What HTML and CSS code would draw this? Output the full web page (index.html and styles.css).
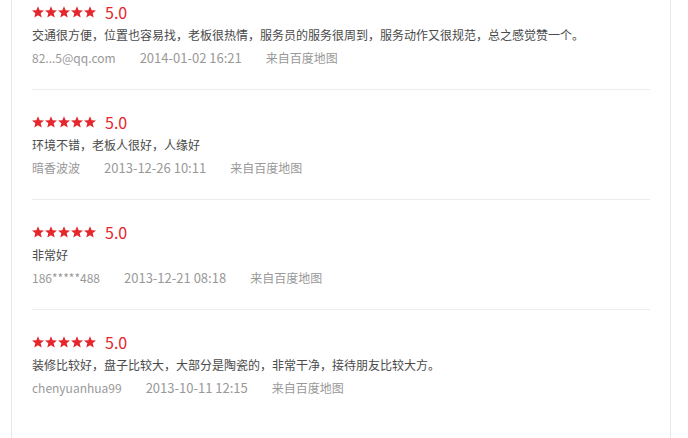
FILE: index.html
```html
<!DOCTYPE html>
<html lang="zh-CN">
<head>
    <meta charset="UTF-8">
    <meta name="viewport" content="width=device-width, initial-scale=1.0">
    <title>用户点评</title>
    <link rel="stylesheet" href="styles.css">
</head>
<body>
    <svg class="sprite" width="0" height="0">
        <defs>
            <polygon id="star" points="6,0.2 7.65,4.23 11.99,4.55 8.66,7.37 9.7,11.6 6,9.3 2.3,11.6 3.34,7.37 0.01,4.55 4.35,4.23"/>
            <g id="stars5">
                <use href="#star" x="0"/>
                <use href="#star" x="13"/>
                <use href="#star" x="26"/>
                <use href="#star" x="39"/>
                <use href="#star" x="52"/>
            </g>
        </defs>
    </svg>

    <div class="review-box">
        <ul class="review-list">
            <li class="review">
                <div class="rating">
                    <svg class="stars" width="64" height="12" viewBox="0 0 64 12"><use href="#stars5"/></svg>
                    <span class="score">5.0</span>
                </div>
                <p class="comment">交通很方便，位置也容易找，老板很热情，服务员的服务很周到，服务动作又很规范，总之感觉赞一个。</p>
                <div class="meta">
                    <span class="user">82...5@qq.com</span>
                    <span class="time">2014-01-02 16:21</span>
                    <span class="source">来自百度地图</span>
                </div>
            </li>
            <li class="review">
                <div class="rating">
                    <svg class="stars" width="64" height="12" viewBox="0 0 64 12"><use href="#stars5"/></svg>
                    <span class="score">5.0</span>
                </div>
                <p class="comment">环境不错，老板人很好，人缘好</p>
                <div class="meta">
                    <span class="user">暗香波波</span>
                    <span class="time">2013-12-26 10:11</span>
                    <span class="source">来自百度地图</span>
                </div>
            </li>
            <li class="review">
                <div class="rating">
                    <svg class="stars" width="64" height="12" viewBox="0 0 64 12"><use href="#stars5"/></svg>
                    <span class="score">5.0</span>
                </div>
                <p class="comment">非常好</p>
                <div class="meta">
                    <span class="user">186*****488</span>
                    <span class="time">2013-12-21 08:18</span>
                    <span class="source">来自百度地图</span>
                </div>
            </li>
            <li class="review">
                <div class="rating">
                    <svg class="stars" width="64" height="12" viewBox="0 0 64 12"><use href="#stars5"/></svg>
                    <span class="score">5.0</span>
                </div>
                <p class="comment">装修比较好，盘子比较大，大部分是陶瓷的，非常干净，接待朋友比较大方。</p>
                <div class="meta">
                    <span class="user">chenyuanhua99</span>
                    <span class="time">2013-10-11 12:15</span>
                    <span class="source">来自百度地图</span>
                </div>
            </li>
        </ul>
    </div>
</body>
</html>
```

FILE: styles.css
```css
body {
    margin: 0;
    background: #fff;
    font-family: "Microsoft YaHei", "Noto Sans CJK SC", sans-serif;
    color: #333;
}

.sprite {
    position: absolute;
    width: 0;
    height: 0;
    overflow: hidden;
}

.review-box {
    width: 618px;
    min-height: 460px;
    margin-left: 11px;
    padding: 0 20px;
    border-left: 1px solid #e6e6e6;
    border-right: 1px solid #e6e6e6;
}

.review-list {
    list-style: none;
    margin: 0;
    padding: 0;
}

.review {
    padding: 20px 0;
    border-bottom: 1px solid #ececec;
}

.review:first-child {
    padding-top: 0;
}

.review:last-child {
    border-bottom: none;
}

.rating {
    display: flex;
    align-items: center;
    height: 23px;
}

.stars {
    display: block;
    fill: #e4262d;
}

.score {
    margin-left: 9px;
    font-size: 16px;
    color: #e4262d;
}

.comment {
    margin: 0;
    font-size: 12px;
    line-height: 23px;
    color: #4a4a4a;
}

.meta {
    display: flex;
    height: 23px;
    align-items: center;
    font-size: 12px;
    color: #999;
}

.user, .time {
    margin-right: 24px;
}

.time {
    font-size: 13px;
}
```
